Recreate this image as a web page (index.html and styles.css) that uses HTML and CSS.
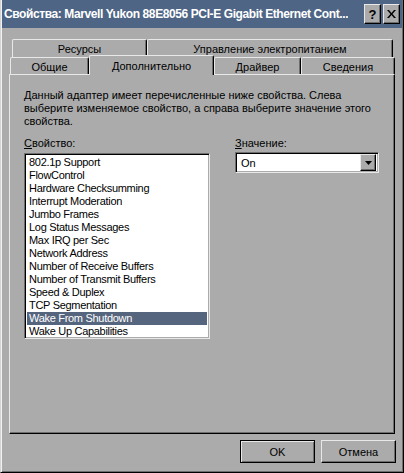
FILE: index.html
```html
<!DOCTYPE html>
<html lang="ru">
<head>
    <meta charset="UTF-8">
    <title>Свойства: Marvell Yukon 88E8056 PCI-E Gigabit Ethernet Controller</title>
    <link rel="stylesheet" href="styles.css">
</head>
<body>
    <div class="window">
        <div class="titlebar">
            <span class="title">Свойства: Marvell Yukon 88E8056 PCI-E Gigabit Ethernet Cont...</span>
            <div class="title-buttons">
                <span class="caption-btn">?</span>
                <span class="caption-btn close">
                    <svg width="9" height="8" viewBox="0 0 9 8">
                        <path d="M0 0h2l2.5 3 2.5-3h2L5.5 4 9 8H7L4.5 5 2 8H0l3.5-4z" fill="#000"/>
                    </svg>
                </span>
            </div>
        </div>

        <div class="content">
            <div class="tab-row back">
                <div class="tab t-res">Ресурсы</div>
                <div class="tab t-power">Управление электропитанием</div>
            </div>
            <div class="tab-row front">
                <div class="tab t-general">Общие</div>
                <div class="tab t-adv active">Дополнительно</div>
                <div class="tab t-driver">Драйвер</div>
                <div class="tab t-info">Сведения</div>
            </div>

            <div class="panel">
                <p class="desc">Данный адаптер имеет перечисленные ниже свойства. Слева выберите изменяемое свойство, а справа выберите значение этого свойства.</p>

                <div class="fields">
                    <div class="field-prop">
                        <label><u>С</u>войство:</label>
                        <ul class="listbox">
                            <li>802.1p Support</li>
                            <li>FlowControl</li>
                            <li>Hardware Checksumming</li>
                            <li>Interrupt Moderation</li>
                            <li>Jumbo Frames</li>
                            <li>Log Status Messages</li>
                            <li>Max IRQ per Sec</li>
                            <li>Network Address</li>
                            <li>Number of Receive Buffers</li>
                            <li>Number of Transmit Buffers</li>
                            <li>Speed &amp; Duplex</li>
                            <li>TCP Segmentation</li>
                            <li class="selected">Wake From Shutdown</li>
                            <li>Wake Up Capabilities</li>
                        </ul>
                    </div>
                    <div class="field-value">
                        <label><u>З</u>начение:</label>
                        <div class="combo">
                            <span class="combo-text">On</span>
                            <span class="combo-btn">
                                <svg width="7" height="4" viewBox="0 0 7 4"><path d="M0 0h7L3.5 4z" fill="#000"/></svg>
                            </span>
                        </div>
                    </div>
                </div>
            </div>

            <div class="buttons">
                <button class="btn default">OK</button>
                <button class="btn">Отмена</button>
            </div>
        </div>
    </div>
</body>
</html>
```

FILE: styles.css
```css
body {
    margin: 0;
    font-family: "Liberation Sans", Arial, sans-serif;
    font-size: 11px;
    color: #000;
    background: #ababab;
}
.window {
    width: 404px;
    height: 473px;
    box-sizing: border-box;
    background: #ababab;
    border-left: 1px solid #d4d4d4;
    border-right: 1px solid #000;
    border-bottom: 1px solid #000;
    box-shadow: inset 1px 0 #f2f2f2, inset -1px -1px #6e6e6e;
}
.titlebar {
    height: 28px;
    margin: 0 1px 0 1px;
    background: #4e6585;
    display: flex;
    align-items: center;
    justify-content: space-between;
    padding: 0 2px 0 2px;
}
.title {
    color: #fff;
    font-weight: bold;
    font-size: 12px;
    letter-spacing: -0.4px;
    white-space: nowrap;
    overflow: hidden;
    margin-right: 2px;
}
.title-buttons {
    display: flex;
    gap: 2px;
    flex-shrink: 0;
}
.caption-btn {
    width: 17px;
    height: 20px;
    box-sizing: border-box;
    background: #ababab;
    border-top: 1px solid #e8e8e8;
    border-left: 1px solid #e8e8e8;
    border-right: 1px solid #000;
    border-bottom: 1px solid #000;
    box-shadow: inset -1px -1px #6e6e6e;
    display: flex;
    align-items: center;
    justify-content: center;
    font-weight: bold;
    font-size: 13px;
}
.content {
    padding: 11px 8px 0 8px;
}
.tab-row {
    display: flex;
    height: 18px;
}
.tab-row.back {
    margin: 0 2px 0 3px;
}
.tab-row.front {
    margin: 0 0 0 1px;
    height: 17px;
}
.tab {
    box-sizing: border-box;
    background: #ababab;
    border-top: 1px solid #e8e8e8;
    border-left: 1px solid #e8e8e8;
    border-right: 1px solid #000;
    border-radius: 2px 2px 0 0;
    box-shadow: inset -1px 0 #6e6e6e;
    display: flex;
    justify-content: center;
    padding-top: 3px;
    white-space: nowrap;
}
.t-res { width: 135px; }
.t-power { flex: 1; }
.t-general { width: 79px; }
.t-adv { width: 125px; }
.t-driver { width: 87px; }
.t-info { flex: 1; }
.tab.active {
    position: relative;
    z-index: 1;
    height: 20px;
    margin-top: -2px;
    padding-top: 4px;
}
.panel {
    height: 360px;
    box-sizing: border-box;
    border-top: 1px solid #e8e8e8;
    border-left: 1px solid #e8e8e8;
    border-right: 1px solid #000;
    border-bottom: 1px solid #000;
    box-shadow: inset -1px -1px #6e6e6e;
    padding: 14px 14px 0 14px;
}
.desc {
    margin: 0;
    line-height: 13px;
    width: 366px;
}
.fields {
    display: flex;
    margin-top: 9px;
}
.field-prop {
    width: 186px;
}
.field-value {
    width: 144px;
    margin-left: 25px;
}
label {
    display: block;
    height: 13px;
    line-height: 13px;
    margin-bottom: 3px;
}
.listbox {
    list-style: none;
    margin: 0;
    padding: 0;
    height: 186px;
    box-sizing: border-box;
    background: #fff;
    border-top: 1px solid #6e6e6e;
    border-left: 1px solid #6e6e6e;
    border-right: 1px solid #e8e8e8;
    border-bottom: 1px solid #e8e8e8;
    box-shadow: inset 1px 1px #000, inset -1px -1px #ababab;
    padding: 2px 2px;
}
.listbox li {
    height: 13px;
    line-height: 13px;
    padding-left: 2px;
    white-space: nowrap;
    letter-spacing: -0.3px;
}
.listbox li.selected {
    background: #56657e;
    color: #fff;
}
.combo {
    height: 21px;
    margin-top: -1px;
    box-sizing: border-box;
    background: #fff;
    border-top: 1px solid #6e6e6e;
    border-left: 1px solid #6e6e6e;
    border-right: 1px solid #e8e8e8;
    border-bottom: 1px solid #e8e8e8;
    box-shadow: inset 1px 1px #000, inset -1px -1px #ababab;
    display: flex;
    align-items: center;
    justify-content: space-between;
    padding: 0 2px 0 5px;
}
.combo-btn {
    width: 16px;
    height: 17px;
    box-sizing: border-box;
    background: #ababab;
    border-top: 1px solid #e8e8e8;
    border-left: 1px solid #e8e8e8;
    border-right: 1px solid #000;
    border-bottom: 1px solid #000;
    box-shadow: inset -1px -1px #6e6e6e;
    display: flex;
    align-items: center;
    justify-content: center;
}
.buttons {
    display: flex;
    justify-content: flex-end;
    gap: 6px;
    margin-top: 6px;
    margin-right: -1px;
}
.btn {
    width: 75px;
    height: 23px;
    box-sizing: border-box;
    font-family: "Liberation Sans", Arial, sans-serif;
    font-size: 11px;
    color: #000;
    background: #ababab;
    border-top: 1px solid #e8e8e8;
    border-left: 1px solid #e8e8e8;
    border-right: 1px solid #000;
    border-bottom: 1px solid #000;
    box-shadow: inset -1px -1px #6e6e6e;
    padding: 0;
}
.btn.default {
    border: 1px solid #000;
    box-shadow: inset 1px 1px #e8e8e8, inset -1px -1px #6e6e6e;
}
```
